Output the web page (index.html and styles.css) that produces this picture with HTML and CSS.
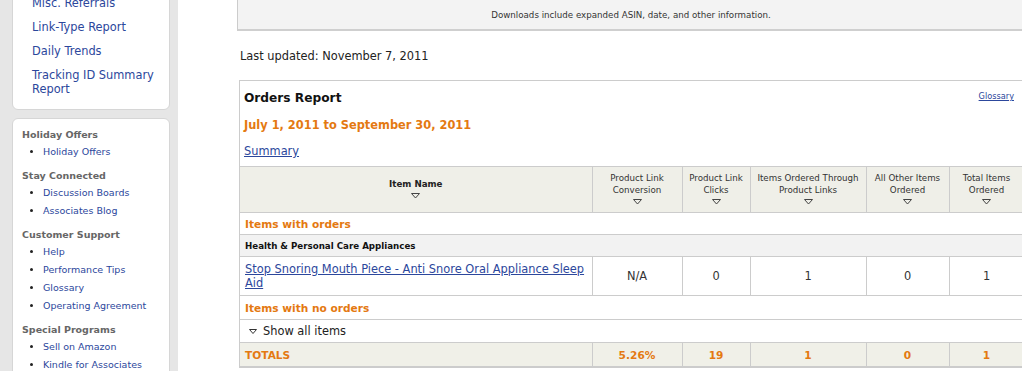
FILE: index.html
```html
<!DOCTYPE html>
<html lang="en">
<head>
    <meta charset="UTF-8">
    <title>Orders Report</title>
    <link rel="stylesheet" href="styles.css">
</head>
<body>
<div class="page">

    <!-- Left navigation -->
    <aside class="sidebar">
        <div class="side-box nav-box">
            <a href="#">Misc. Referrals</a>
            <a href="#">Link-Type Report</a>
            <a href="#">Daily Trends</a>
            <a href="#">Tracking ID Summary Report</a>
        </div>

        <div class="side-box links-box">
            <h4>Holiday Offers</h4>
            <ul>
                <li><a href="#">Holiday Offers</a></li>
            </ul>
            <h4>Stay Connected</h4>
            <ul>
                <li><a href="#">Discussion Boards</a></li>
                <li><a href="#">Associates Blog</a></li>
            </ul>
            <h4>Customer Support</h4>
            <ul>
                <li><a href="#">Help</a></li>
                <li><a href="#">Performance Tips</a></li>
                <li><a href="#">Glossary</a></li>
                <li><a href="#">Operating Agreement</a></li>
            </ul>
            <h4>Special Programs</h4>
            <ul>
                <li><a href="#">Sell on Amazon</a></li>
                <li><a href="#">Kindle for Associates</a></li>
            </ul>
        </div>
    </aside>

    <!-- Main content -->
    <main class="content">
        <div class="download-note">Downloads include expanded ASIN, date, and other information.</div>

        <p class="updated">Last updated: November 7, 2011</p>

        <section class="report">
            <div class="report-head">
                <h2>Orders Report</h2>
                <a href="#" class="glossary">Glossary</a>
            </div>
            <h3 class="range">July 1, 2011 to September 30, 2011</h3>
            <a href="#" class="summary">Summary</a>

            <table class="orders">
                <colgroup>
                    <col style="width: 352px">
                    <col style="width: 90px">
                    <col style="width: 68px">
                    <col style="width: 116px">
                    <col style="width: 83px">
                    <col style="width: 75px">
                </colgroup>
                <thead>
                    <tr>
                        <th class="name-head">Item Name<span class="sort"><svg width="9" height="6" viewBox="0 0 9 6"><path d="M0.5 0.5 H8.5 L4.5 5 Z" fill="none" stroke="#444" stroke-width="1"/></svg></span></th>
                        <th>Product Link Conversion<span class="sort"><svg width="9" height="6" viewBox="0 0 9 6"><path d="M0.5 0.5 H8.5 L4.5 5 Z" fill="none" stroke="#444" stroke-width="1"/></svg></span></th>
                        <th>Product Link Clicks<span class="sort"><svg width="9" height="6" viewBox="0 0 9 6"><path d="M0.5 0.5 H8.5 L4.5 5 Z" fill="none" stroke="#444" stroke-width="1"/></svg></span></th>
                        <th>Items Ordered Through Product Links<span class="sort"><svg width="9" height="6" viewBox="0 0 9 6"><path d="M0.5 0.5 H8.5 L4.5 5 Z" fill="none" stroke="#444" stroke-width="1"/></svg></span></th>
                        <th>All Other Items Ordered<span class="sort"><svg width="9" height="6" viewBox="0 0 9 6"><path d="M0.5 0.5 H8.5 L4.5 5 Z" fill="none" stroke="#444" stroke-width="1"/></svg></span></th>
                        <th>Total Items Ordered<span class="sort"><svg width="9" height="6" viewBox="0 0 9 6"><path d="M0.5 0.5 H8.5 L4.5 5 Z" fill="none" stroke="#444" stroke-width="1"/></svg></span></th>
                    </tr>
                </thead>
                <tbody>
                    <tr class="group-row">
                        <td colspan="6">Items with orders</td>
                    </tr>
                    <tr class="category-row">
                        <td colspan="6">Health &amp; Personal Care Appliances</td>
                    </tr>
                    <tr class="item-row">
                        <td class="item-name"><a href="#">Stop Snoring Mouth Piece - Anti Snore Oral Appliance Sleep Aid</a></td>
                        <td>N/A</td>
                        <td>0</td>
                        <td>1</td>
                        <td>0</td>
                        <td>1</td>
                    </tr>
                    <tr class="group-row no-orders">
                        <td colspan="6">Items with no orders</td>
                    </tr>
                    <tr class="show-row">
                        <td colspan="6"><svg class="show-arrow" width="8" height="5" viewBox="0 0 8 5"><path d="M0.5 0.5 H7.5 L4 4.5 Z" fill="none" stroke="#333" stroke-width="1"/></svg>Show all items</td>
                    </tr>
                    <tr class="totals-row">
                        <td class="item-name">TOTALS</td>
                        <td>5.26%</td>
                        <td>19</td>
                        <td>1</td>
                        <td>0</td>
                        <td>1</td>
                    </tr>
                </tbody>
            </table>
        </section>
    </main>
</div>
</body>
</html>
```

FILE: styles.css
```css
html, body {
    margin: 0;
    padding: 0;
    height: 100%;
    overflow: hidden;
    font-family: "DejaVu Sans", Verdana, sans-serif;
    color: #222;
    background: #fff;
}

a {
    color: #2c479c;
}

.page {
    display: flex;
    min-height: 100%;
}

/* Sidebar */
.sidebar {
    flex: 0 0 178px;
    box-sizing: border-box;
    padding-left: 12px;
    background-color: #e6e6e6;
}

.side-box {
    box-sizing: border-box;
    width: 158px;
    background-color: #fff;
    border: 1px solid #d6d6d6;
    border-radius: 6px;
}

.nav-box {
    margin-top: -16px;
    padding: 11px 6px 13px 19px;
}

.nav-box a {
    display: block;
    font-size: 11.4px;
    line-height: 14px;
    text-decoration: none;
    margin-bottom: 10px;
}

.nav-box a:last-child {
    margin-bottom: 0;
}

.links-box {
    margin-top: 8px;
    padding: 10px 6px 20px 9px;
}

.links-box h4 {
    margin: 0;
    font-size: 9.5px;
    line-height: 12px;
    color: #666;
}

.links-box ul {
    margin: 5px 0 12px;
    padding-left: 21px;
    list-style: disc;
}

.links-box li {
    font-size: 9.5px;
    line-height: 12px;
}

.links-box li + li {
    margin-top: 6px;
}

.links-box a {
    text-decoration: none;
}

/* Main content */
.content {
    flex: 0 0 auto;
    width: 785px;
    padding-left: 61px;
}

.download-note {
    margin-left: -2px;
    padding: 9px 0 8px;
    background-color: #f3f3f3;
    border-left: 1px solid #ccc;
    border-bottom: 2px solid #cfcfcf;
    font-size: 8.7px;
    line-height: 12px;
    text-align: center;
    color: #333;
}

.updated {
    margin: 18px 0 17px 1px;
    font-size: 11.4px;
    line-height: 14px;
    color: #222;
}

.report {
    border: 1px solid #ccc;
}

.report-head {
    display: flex;
    justify-content: space-between;
    align-items: center;
    padding: 9px 9px 0 4px;
}

.report-head h2 {
    margin: 0;
    font-size: 12.2px;
    line-height: 16px;
    color: #111;
}

.glossary {
    font-size: 8.2px;
    margin-bottom: 4px;
}

.range {
    margin: 12px 0 0 4px;
    font-size: 11.4px;
    line-height: 14px;
    color: #e47911;
}

.summary {
    display: inline-block;
    margin: 12px 0 8px 4px;
    font-size: 11.4px;
    line-height: 14px;
}

/* Orders table */
.orders {
    width: 100%;
    table-layout: fixed;
    border-collapse: collapse;
    font-size: 11.4px;
    color: #333;
}

.orders th,
.orders td {
    border: 1px solid #ccc;
    text-align: center;
    vertical-align: middle;
}

.orders tr > :first-child {
    border-left: none;
}

.orders th {
    padding: 5px 3px 6px;
    background-color: #efefe8;
    font-size: 8.7px;
    line-height: 12px;
    font-weight: normal;
    color: #333;
}

.orders th.name-head {
    font-weight: bold;
    color: #222;
}

.sort {
    display: block;
    height: 10px;
    line-height: 10px;
}

.sort svg {
    vertical-align: middle;
}

.orders td {
    padding: 4px 5px;
    line-height: 14px;
}

.group-row td {
    padding: 4px 5px 3px;
    text-align: left;
    font-size: 10.6px;
    font-weight: bold;
    color: #e47911;
}

.group-row.no-orders td {
    padding: 5px 5px 4px;
}

.category-row td {
    padding: 4px 5px 3px;
    text-align: left;
    background-color: #f2f2f2;
    font-size: 8.7px;
    font-weight: bold;
    color: #111;
}

.item-row td {
    padding: 5px 5px;
}

.orders td.item-name {
    text-align: left;
}

.show-row td {
    padding: 4px 5px 4px 9px;
    text-align: left;
    color: #222;
}

.show-arrow {
    margin-right: 6px;
    vertical-align: middle;
}

.totals-row td {
    padding: 5px 5px 4px;
    background-color: #f0f0e8;
    font-size: 10.6px;
    font-weight: bold;
    color: #e47911;
}
```
